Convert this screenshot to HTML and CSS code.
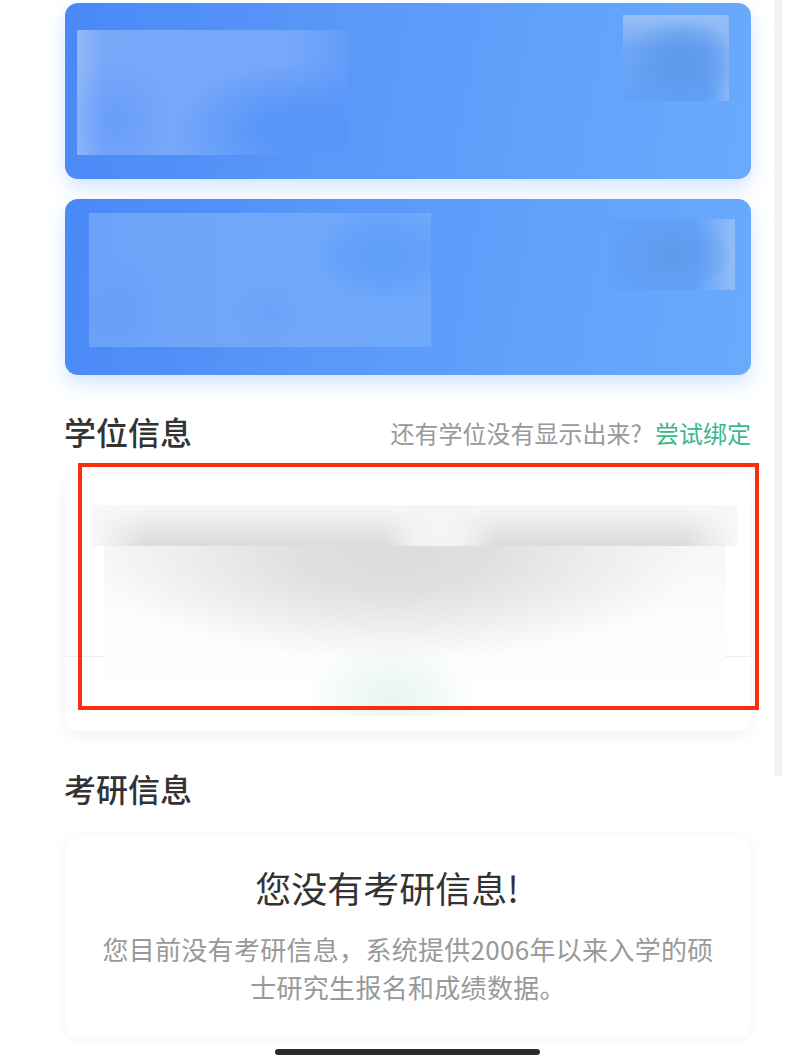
FILE: index.html
```html
<!DOCTYPE html>
<html lang="zh-CN">
<head>
<meta charset="utf-8">
<title>学位信息</title>
<link rel="stylesheet" href="styles.css">
</head>
<body>
<div class="app">
  <main class="content">
    <section class="blue-card">
      <div class="patch patch-a"></div>
      <div class="patch patch-b"></div>
    </section>
    <section class="blue-card blue-card-next">
      <div class="patch patch-c"></div>
      <div class="patch patch-d"></div>
    </section>

    <header class="section-head section-head-degree">
      <h2 class="section-title">学位信息</h2>
      <p class="section-hint">还有学位没有显示出来?<a class="section-link">尝试绑定</a></p>
    </header>
    <section class="degree-card">
      <div class="rule"></div>
      <div class="smudge smudge-top"></div>
      <div class="smudge smudge-main"></div>
    </section>

    <header class="section-head section-head-exam">
      <h2 class="section-title">考研信息</h2>
    </header>
    <section class="exam-card">
      <h3 class="exam-title">您没有考研信息!</h3>
      <p class="exam-text">您目前没有考研信息&#65292;系统提供2006年以来入学的硕<br>士研究生报名和成绩数据。</p>
    </section>
  </main>
  <div class="scrollbar"></div>
  <div class="red-frame"></div>
  <div class="home-bar"></div>
</div>
</body>
</html>
```
FILE: styles.css
```css
* { box-sizing: border-box; }
html, body { margin: 0; padding: 0; background: #fff; }
.app {
  position: relative;
  width: 789px;
  height: 1058px;
  overflow: hidden;
  font-family: "Noto Sans CJK SC", "Noto Sans", sans-serif;
  color: #333;
}
.content {
  display: flex;
  flex-direction: column;
  width: 686px;
  margin-left: 65px;
  padding-top: 3px;
}
.blue-card {
  position: relative;
  height: 176px;
  flex: none;
  border-radius: 13px;
  background: linear-gradient(100deg, #4a88f7 0%, #5a98f9 40%, #62a4fb 75%, #69aafc 100%);
  box-shadow: 0 8px 18px rgba(90, 160, 250, .28);
}
.blue-card-next { margin-top: 20px; }
.patch { position: absolute; }
.patch-a {
  left: 12px; top: 27px; width: 271px; height: 125px;
  background:
    radial-gradient(ellipse 130px 68px at 225px 100px, #5795f9 0%, #5795f9 25%, rgba(87,149,249,.5) 65%, rgba(87,149,249,0) 100%),
    linear-gradient(90deg, rgba(87,149,249,0) 80%, rgba(87,149,249,.6) 100%),
    radial-gradient(ellipse 55px 65px at 40px 90px, rgba(98,154,248,.7) 0%, rgba(98,154,248,0) 100%),
    linear-gradient(90deg, #93b8f9 0%, #78a8f8 10%, #75a7f9 100%);
}
.patch-b {
  left: 558px; top: 12px; width: 106px; height: 86px;
  background:
    radial-gradient(ellipse 58px 48px at 57px 50px, #5e98e9 0%, #5f9aec 30%, rgba(96,154,236,.5) 65%, rgba(96,154,236,0) 100%),
    linear-gradient(90deg, rgba(98,161,249,0) 80%, rgba(147,189,246,.8) 100%),
    linear-gradient(180deg, #98c0f7 0%, #70a8f5 40%, #62a1f8 100%);
}
.patch-c {
  left: 24px; top: 14px; width: 342px; height: 134px;
  background:
    radial-gradient(ellipse 75px 50px at 295px 42px, #5f9ef9 0%, rgba(95,158,249,.75) 50%, rgba(95,158,249,0) 100%),
    radial-gradient(ellipse 40px 40px at 182px 102px, rgba(101,160,247,.6) 0%, rgba(101,160,247,0) 100%),
    radial-gradient(ellipse 45px 55px at 28px 100px, rgba(101,157,246,.7) 0%, rgba(101,157,246,0) 100%),
    linear-gradient(90deg, #6ca3f8 0%, #72a8f9 60%, #70a9fa 100%);
}
.patch-d {
  left: 549px; top: 20px; width: 121px; height: 71px;
  background:
    radial-gradient(ellipse 58px 40px at 58px 36px, #5f99e9 0%, #619cee 30%, rgba(97,156,238,.5) 65%, rgba(97,156,238,0) 100%),
    linear-gradient(90deg, rgba(98,161,249,0) 65%, rgba(150,190,246,.95) 100%),
    #62a1f9;
}
.section-head {
  display: flex;
  align-items: center;
  justify-content: space-between;
  height: 60px;
  flex: none;
}
.section-head-degree { margin-top: 28px; }
.section-head-exam { margin-top: 29px; }
.section-title {
  position: relative;
  top: -2px;
  margin: 0 0 0 -1px;
  font-size: 32px;
  line-height: 44px;
  font-weight: 500;
  color: #333;
}
.section-hint {
  margin: 0;
  font-size: 24px;
  line-height: 34px;
  color: #999;
}
.section-link { margin-left: 13px; color: #3cb88b; }
.degree-card {
  position: relative;
  height: 257px;
  margin-top: 11px;
  flex: none;
  border-radius: 13px;
  background: #fff;
  box-shadow: 0 4px 16px rgba(0, 0, 0, .06);
}
.rule {
  position: absolute;
  left: 0; right: 0; top: 182px;
  height: 1px;
  background: #eee;
}
.smudge { position: absolute; }
.smudge-top {
  left: 27px; top: 31px; width: 645px; height: 41px;
  background:
    radial-gradient(ellipse 55px 50px at 347px 30px, #f5f5f5 0%, rgba(245,245,245,.85) 45%, rgba(245,245,245,0) 100%),
    linear-gradient(90deg, #f8f8f8 0%, rgba(248,248,248,0) 8%, rgba(248,248,248,0) 92%, #f8f8f8 100%),
    linear-gradient(180deg, #f8f8f8 0%, #e6e6e6 60%, #dcdcdc 100%);
}
.smudge-main {
  left: 39px; top: 72px; width: 621px; height: 170px;
  background:
    radial-gradient(ellipse 85px 62px at 287px 152px, rgba(229,245,238,.9) 0%, rgba(229,245,238,.6) 40%, rgba(229,245,238,0) 100%),
    radial-gradient(ellipse 300px 108px at 290px 10px, #dcdcdc 0%, #dfdfdf 30%, rgba(228,228,228,.6) 65%, rgba(240,240,240,0) 100%),
    linear-gradient(180deg, #f7f7f7 0%, #fdfdfd 50%, #fff 100%);
}
.exam-card {
  height: 201px;
  margin-top: 16px;
  flex: none;
  padding-top: 26px;
  border-radius: 13px;
  background: #fff;
  box-shadow: 0 2px 12px rgba(0, 0, 0, .05);
  text-align: center;
}
.exam-title {
  margin: 0;
  padding-right: 42px;
  font-size: 36px;
  line-height: 50px;
  font-weight: 400;
  color: #333;
}
.exam-text {
  margin: 18px 0 0;
  font-size: 26px;
  line-height: 38px;
  letter-spacing: .3px;
  color: #999;
}
.scrollbar {
  position: absolute;
  left: 774px; top: 0;
  width: 8px; height: 776px;
  background: #f3f3f3;
}
.red-frame {
  position: absolute;
  left: 78px; top: 463px;
  width: 681px; height: 247px;
  border: 4px solid #fa2f0b;
}
.home-bar {
  position: absolute;
  left: 275px; top: 1049px;
  width: 265px; height: 6px;
  border-radius: 3px;
  background: #2b2b2b;
}
```
